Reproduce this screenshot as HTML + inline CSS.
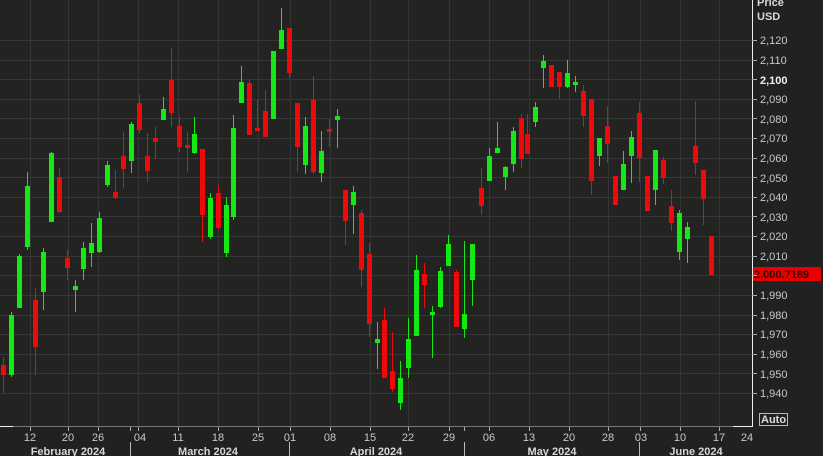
<!DOCTYPE html>
<html><head><meta charset="utf-8"><style>
html,body{margin:0;padding:0;background:#222222;}
body{width:823px;height:456px;overflow:hidden;position:relative;font-family:"Liberation Sans",sans-serif;}
svg{position:absolute;left:0;top:0;}
</style></head><body>
<svg id="s" width="823" height="456" xmlns="http://www.w3.org/2000/svg">
<rect width="823" height="456" fill="#212121"/>
<rect width="752" height="426" fill="#232422"/>
<g id="grid" stroke="#363636" stroke-width="1"></g>
<g id="c"></g>
<g fill="#c8c8c8" font-size="11" font-family="Liberation Sans, sans-serif">
<text x="757" y="6" font-weight="bold" fill="#d8d8d8">Price</text>
<text x="757" y="20" font-weight="bold" fill="#d8d8d8">USD</text>
<text x="760" y="44">2,120</text>
<text x="760" y="64">2,110</text>
<text x="760" y="84" font-weight="bold" fill="#f0f0f0">2,100</text>
<text x="760" y="103">2,090</text>
<text x="760" y="123">2,080</text>
<text x="760" y="142">2,070</text>
<text x="760" y="162">2,060</text>
<text x="760" y="182">2,050</text>
<text x="760" y="201">2,040</text>
<text x="760" y="221">2,030</text>
<text x="760" y="240">2,020</text>
<text x="760" y="260">2,010</text>
<text x="760" y="299">1,990</text>
<text x="760" y="319">1,980</text>
<text x="760" y="338">1,970</text>
<text x="760" y="358">1,960</text>
<text x="760" y="378">1,950</text>
<text x="760" y="397">1,940</text>
</g>
<rect x="752" y="267" width="69" height="14" fill="#e80000"/>
<text x="754" y="278" font-size="11" font-weight="bold" fill="#400000" font-family="Liberation Sans, sans-serif">2,000.7189</text>
<rect x="759.5" y="413.5" width="28" height="12" fill="none" stroke="#bbb"/>
<text x="761" y="423" font-size="11" font-weight="bold" fill="#ddd" font-family="Liberation Sans, sans-serif">Auto</text>
<line x1="752.5" y1="0" x2="752.5" y2="427" stroke="#eee"/>
<line x1="0" y1="426.5" x2="752" y2="426.5" stroke="#777"/>
<line x1="0" y1="426.5" x2="13" y2="426.5" stroke="#eee"/>
<line x1="733" y1="426.5" x2="753" y2="426.5" stroke="#eee"/>
<g id="ticks" stroke="#aaa"></g>
<g fill="#c8c8c8" font-size="11" font-family="Liberation Sans, sans-serif" text-anchor="middle">
<text x="30" y="441">12</text><text x="68" y="441">20</text><text x="98" y="441">26</text>
<text x="140" y="441">04</text><text x="178" y="441">11</text><text x="218" y="441">18</text>
<text x="258" y="441">25</text><text x="290" y="441">01</text><text x="330" y="441">08</text>
<text x="370" y="441">15</text><text x="408" y="441">22</text><text x="449" y="441">29</text>
<text x="489" y="441">06</text><text x="529" y="441">13</text><text x="569" y="441">20</text>
<text x="608" y="441">28</text><text x="641" y="441">03</text><text x="680" y="441">10</text>
<text x="719" y="441">17</text><text x="747" y="441">24</text>
</g>
<g fill="#d8d8d8" font-size="11" font-weight="bold" font-family="Liberation Sans, sans-serif" text-anchor="middle">
<text x="68" y="455">February 2024</text>
<text x="208" y="455">March 2024</text>
<text x="376" y="455">April 2024</text>
<text x="552" y="455">May 2024</text>
<text x="696" y="455">June 2024</text>
</g>
<g stroke="#bbb"><line x1="130.5" y1="442" x2="130.5" y2="456"/><line x1="289.5" y1="442" x2="289.5" y2="456"/><line x1="464.5" y1="442" x2="464.5" y2="456"/><line x1="639.5" y1="442" x2="639.5" y2="456"/></g>
</svg>
<script>
var ns="http://www.w3.org/2000/svg";
function el(p,t,a){var e=document.createElementNS(ns,t);for(var k in a)e.setAttribute(k,a[k]);p.appendChild(e);}
var g=document.getElementById('grid');
for(var p=2120;p>=1940;p-=10){var y=Math.round(40+(2120-p)*1.961)+0.5;el(g,'line',{x1:0,y1:y,x2:752,y2:y});}
var xs=[30,68,98,138,178,218,258,290,330,370,408,449,489,529,569,608,640,680,719];
var tk=document.getElementById('ticks');
xs.forEach(function(x){el(g,'line',{x1:x+.5,y1:0,x2:x+.5,y2:426});el(tk,'line',{x1:x+.5,y1:427,x2:x+.5,y2:431});});
[130,464].forEach(function(x){el(tk,'line',{x1:x+.5,y1:427,x2:x+.5,y2:431});});
for(var p=2120;p>=1940;p-=10){var y=Math.round(40+(2120-p)*1.961)+0.5;el(tk,'line',{x1:752,y1:y,x2:757,y2:y});}
// x, c(1 green/0 red), wickTop, wickBot, bodyTop, bodyBot
var d=[
[3,0,357,393,365,375],[11,1,312,377,315,375],[19,1,254,308,256,308],[27,1,172,250,186,247],[35,0,288,375,300,347],
[43,1,248,310,252,292],[51,1,152,222,153,222],[59,0,168,213,177,212],[67,0,250,280,258,268],[75,1,280,312,286,290],
[83,1,242,280,248,269],[91,1,223,267,243,253],[99,1,212,253,218,252],[107,1,161,187,165,185],[115,0,170,199,192,198],
[123,0,132,188,156,169],[131,1,122,173,124,161],[139,0,95,133,103,130],[147,0,133,182,156,171],[155,0,127,159,138,142],
[163,1,97,120,109,120],[171,0,48,127,80,113],[179,0,117,152,126,147],[187,0,132,172,145,148],[194,1,117,154,134,153],
[202,0,149,242,149,215],[210,1,193,239,198,237],[218,0,185,230,193,228],[226,1,197,257,205,253],[233,1,115,220,128,217],
[241,1,66,103,82,103],[249,0,80,135,83,135],[257,0,100,131,128,131],[265,0,90,137,111,137],[273,1,51,119,51,119],
[281,1,8,49,30,49],[289,0,28,78,28,73],[297,0,103,172,103,147],[305,1,117,174,126,165],[313,0,76,174,100,172],
[321,1,131,182,151,173],[329,0,119,147,129,132],[337,1,109,148,116,120],[345,0,190,245,190,221],[353,1,186,234,192,205],
[361,0,210,287,213,270],[369,0,243,337,254,324],[377,1,322,369,339,343],[384,0,308,378,320,378],[392,0,332,392,371,389],
[400,1,361,410,378,403],[408,1,318,378,339,368],[416,1,255,336,270,336],[424,0,263,308,274,285],[432,1,306,358,312,315],
[440,1,267,308,271,307],[448,1,235,266,244,266],[456,0,270,327,272,327],[464,1,241,338,314,329],[472,1,244,306,244,280],
[481,0,168,215,188,206],[489,1,148,181,156,181],[497,1,122,153,148,153],[505,1,166,190,167,177],[513,1,127,172,131,164],
[521,0,114,168,118,159],[527,0,114,154,134,154],[535,1,102,127,107,122],[543,1,55,88,61,68],[551,0,65,87,65,87],
[559,0,72,99,72,87],[567,1,60,88,73,87],[575,1,76,92,82,85],[583,0,85,127,91,116],[591,0,99,195,99,181],
[599,1,138,166,138,156],[607,0,106,163,126,144],[615,0,176,205,176,205],[623,1,151,190,164,190],[631,1,131,183,137,156],
[639,0,102,182,113,158],[647,0,176,211,176,211],[655,1,150,205,150,190],[663,0,157,184,160,178],[671,0,190,231,206,223],
[679,1,210,260,213,252],[687,1,222,263,227,239],[695,0,101,175,146,163],[703,0,170,225,170,199],[711,0,236,275,236,275]
];
var c=document.getElementById('c');
d.forEach(function(k){var col=k[1]?'#16e816':'#ee0a0a';
el(c,'rect',{x:k[0],y:k[2],width:1,height:k[3]-k[2],fill:col});
el(c,'rect',{x:k[0]-2,y:k[4],width:5,height:Math.max(2,k[5]-k[4]),fill:col});});
</script>
</body></html>
